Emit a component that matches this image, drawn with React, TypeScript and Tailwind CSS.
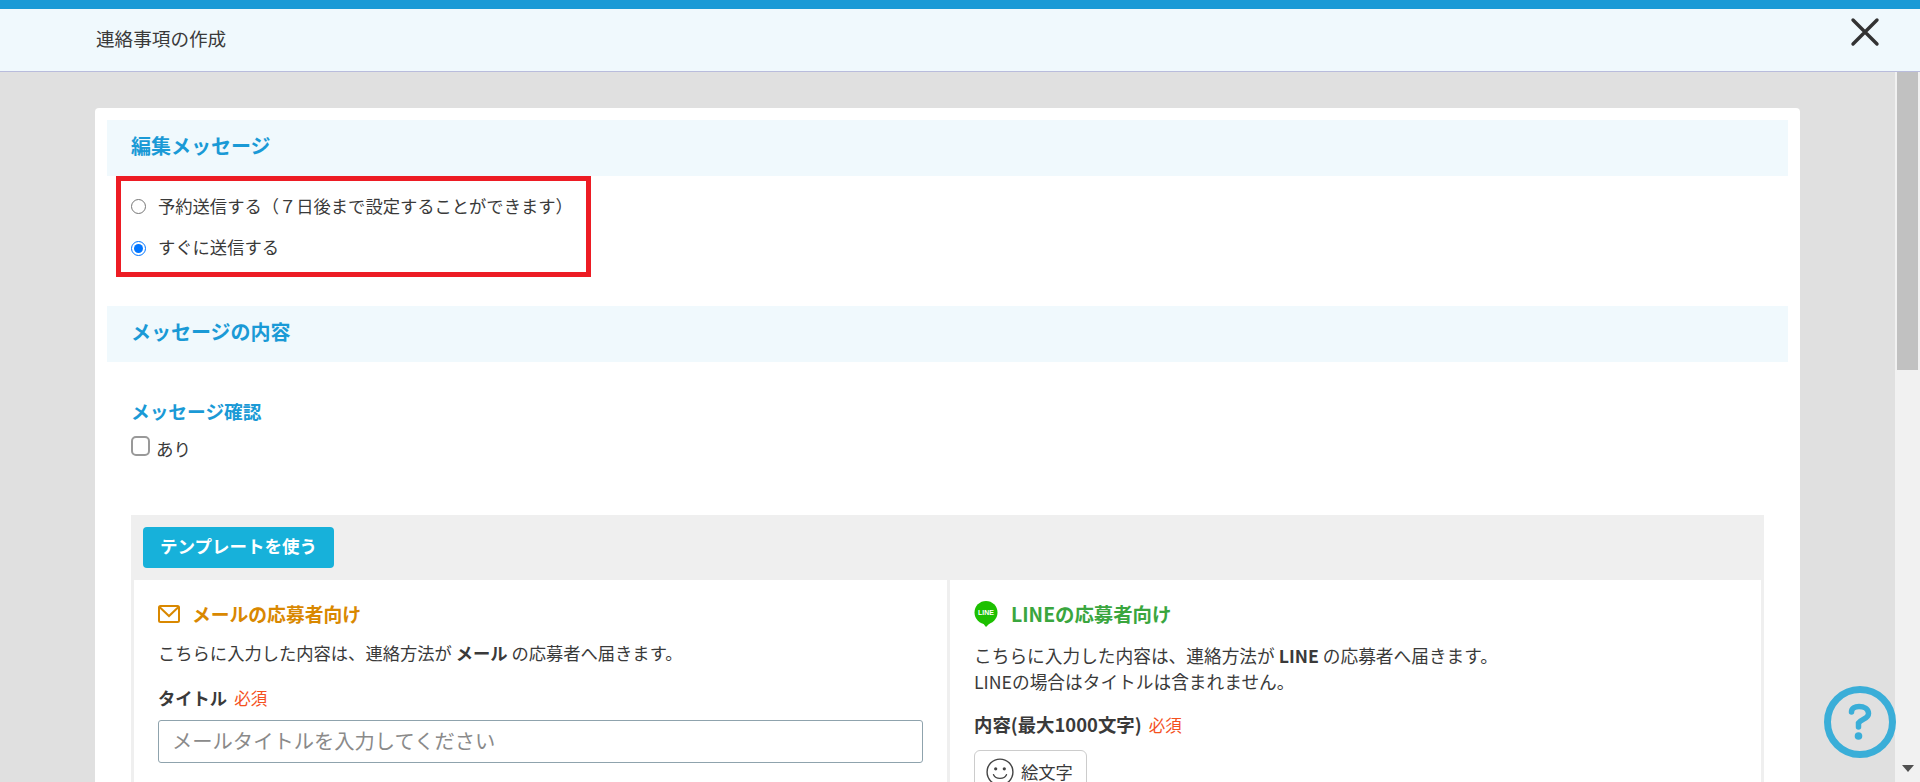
const font = "font-['Noto_Sans_CJK_JP','Noto_Sans',sans-serif]";

const SectionHeader = ({ title }: { title: string }) => (
  <div className="flex h-[56px] items-start bg-[#f0f9fd] px-6 pt-[12px]">
    <h2 className="text-[20px] leading-[28px] font-bold text-[#1a9ad6]">{title}</h2>
  </div>
);

const MailIcon = () => (
  <svg width="22" height="18" viewBox="0 0 22 18" fill="none" stroke="#d98800" strokeWidth="2">
    <rect x="1" y="1" width="20" height="16" rx="1.5" />
    <path d="M1.5 2 L11 11 L20.5 2" />
  </svg>
);

const LineIcon = () => (
  <svg width="24" height="26" viewBox="0 0 24 26">
    <circle cx="12" cy="11.5" r="11.5" fill="#1dc000" />
    <path d="M8 21 L12 26 L17 21 Z" fill="#1dc000" />
    <text x="12" y="14" textAnchor="middle" fontSize="7" fontWeight="700" fill="#fff" fontFamily="Liberation Sans">
      LINE
    </text>
  </svg>
);

const Smiley = () => (
  <svg width="28" height="28" viewBox="0 0 26 26" fill="none" stroke="#444" strokeWidth="1.3">
    <circle cx="13" cy="13" r="12" />
    <circle cx="9" cy="10" r="1.5" fill="#444" stroke="none" />
    <circle cx="17" cy="10" r="1.5" fill="#444" stroke="none" />
    <path d="M7 15.5 C9 20 17 20 19 15.5" strokeLinecap="round" />
  </svg>
);

const Required = () => <span className="ml-[7px] text-[16.5px] font-normal text-[#f4511e]">必須</span>;

export default function App() {
  return (
    <div className={`relative flex h-screen flex-col overflow-hidden text-[17.3px] text-[#3a3a3a] ${font}`}>
      <div className="h-[9px] shrink-0 bg-[#1a9ad6]" />
      <header className="flex h-[63px] shrink-0 items-center justify-between border-b border-[#b9bcdc] bg-[#f0f9fd] pr-[40px] pl-[96px]">
        <span className="mb-[5px] text-[18.6px] leading-6">連絡事項の作成</span>
        <svg width="30" height="30" viewBox="0 0 30 30" className="mb-[16px]" stroke="#333" strokeWidth="3.4" strokeLinecap="round">
          <path d="M3 3 L27 27 M27 3 L3 27" />
        </svg>
      </header>

      <div className="flex min-h-0 flex-1">
        <main className="min-w-0 flex-1 overflow-hidden bg-[#e0e0e0] pt-[36px] pr-[95px] pl-[95px]">
          <div className="rounded-[4px] bg-white p-3">
            <SectionHeader title="編集メッセージ" />

            <div className="relative flex h-[101px] flex-col gap-[17px] px-6 pt-[18px]">
              <label className="flex h-6 items-center gap-3 leading-6">
                <input type="radio" name="send" className="h-[15px] w-[15px] shrink-0" />
                予約送信する（７日後まで設定することができます）
              </label>
              <label className="flex h-6 items-center gap-3 leading-6">
                <input type="radio" name="send" defaultChecked className="mt-[2px] h-[15px] w-[15px] shrink-0" />
                すぐに送信する
              </label>
              <div className="absolute top-0 left-[9px] h-[101px] w-[475px] border-[5px] border-[#ed1c24]" />
            </div>

            <div className="mt-[29px]">
              <SectionHeader title="メッセージの内容" />
            </div>

            <div className="px-6 pt-[36px]">
              <h3 className="text-[18.7px] leading-[26px] font-bold text-[#1a9ad6]">メッセージ確認</h3>
              <label className="mt-[7px] flex items-start gap-[6px]">
                <span className="mt-[5px] h-[20px] w-[19px] rounded-[5px] border-2 border-[#999] bg-white" />
                <span className="mt-[6px] text-[17.5px] leading-6">あり</span>
              </label>

              <div className="mt-[54px] bg-[#efefef] px-[3px] pt-3">
                <button className="ml-[9px] flex h-[41px] w-[191px] items-center justify-center rounded-[4px] bg-[#17b1da] text-[17.5px] font-bold text-white">
                  <span className="mb-[2px]">テンプレートを使う</span>
                </button>

                <div className="mt-3 grid grid-cols-[813px_1fr] gap-[3px]">
                  <section className="bg-white px-6 pt-[21px] pb-10">
                    <div className="flex h-[26px] items-center gap-3">
                      <MailIcon />
                      <h4 className="text-[18.8px] leading-[26px] font-bold text-[#d98800]">メールの応募者向け</h4>
                    </div>
                    <p className="mt-[13px] leading-[26px]">
                      こちらに入力した内容は、連絡方法が <b>メール</b> の応募者へ届きます。
                    </p>
                    <p className="mt-[20px] leading-6 font-bold">
                      タイトル
                      <Required />
                    </p>
                    <input
                      placeholder="メールタイトルを入力してください"
                      className="mt-[10px] h-[43px] w-[765px] rounded-[3px] border border-[#8fa3ad] px-[13px] pb-[4px] text-[20.3px] placeholder:text-[#8a8a8a]"
                    />
                  </section>

                  <section className="bg-white px-6 pt-[21px] pb-10">
                    <div className="flex h-[26px] items-center gap-[13px]">
                      <LineIcon />
                      <h4 className="text-[19.4px] leading-[26px] font-bold text-[#3aa63e]">LINEの応募者向け</h4>
                    </div>
                    <p className="mt-[15px] text-[17.7px] leading-[26px]">
                      こちらに入力した内容は、連絡方法が <b>LINE</b> の応募者へ届きます。
                      <br />
                      LINEの場合はタイトルは含まれません。
                    </p>
                    <p className="mt-[18px] text-[18.4px] leading-6 font-bold">
                      内容(最大1000文字)
                      <Required />
                    </p>
                    <button className="mt-[13px] flex h-[44px] w-[113px] items-center gap-[7px] rounded-[6px] border border-[#ccc] pl-[11px] text-[17.3px]">
                      <Smiley />
                      絵文字
                    </button>
                  </section>
                </div>
              </div>
            </div>
          </div>
        </main>

        <div className="flex w-[25px] shrink-0 flex-col bg-[#f1f1f1] pl-[2px]">
          <div className="h-[298px] w-[21px] bg-[#c1c1c1]" />
          <div className="flex flex-1 items-end justify-center pr-[2px] pb-[10px]">
            <svg width="12" height="7" viewBox="0 0 12 7">
              <path d="M0 0 H12 L6 7 Z" fill="#505050" />
            </svg>
          </div>
        </div>
      </div>

      <svg width="72" height="72" viewBox="0 0 72 72" fill="none" className="absolute top-[686px] left-[1824px]">
        <circle cx="36" cy="36" r="32.5" stroke="#3aaed8" strokeWidth="7" />
        <path
          d="M27.5 26 C27.5 22 31 20.5 35 20.5 C40 20.5 44.5 23 44.5 27.5 C44.5 33 37 33 34.5 37 L34.5 41"
          stroke="#3aaed8"
          strokeWidth="5.5"
          strokeLinecap="round"
        />
        <circle cx="34.5" cy="50" r="3.8" fill="#3aaed8" />
      </svg>
    </div>
  );
}
